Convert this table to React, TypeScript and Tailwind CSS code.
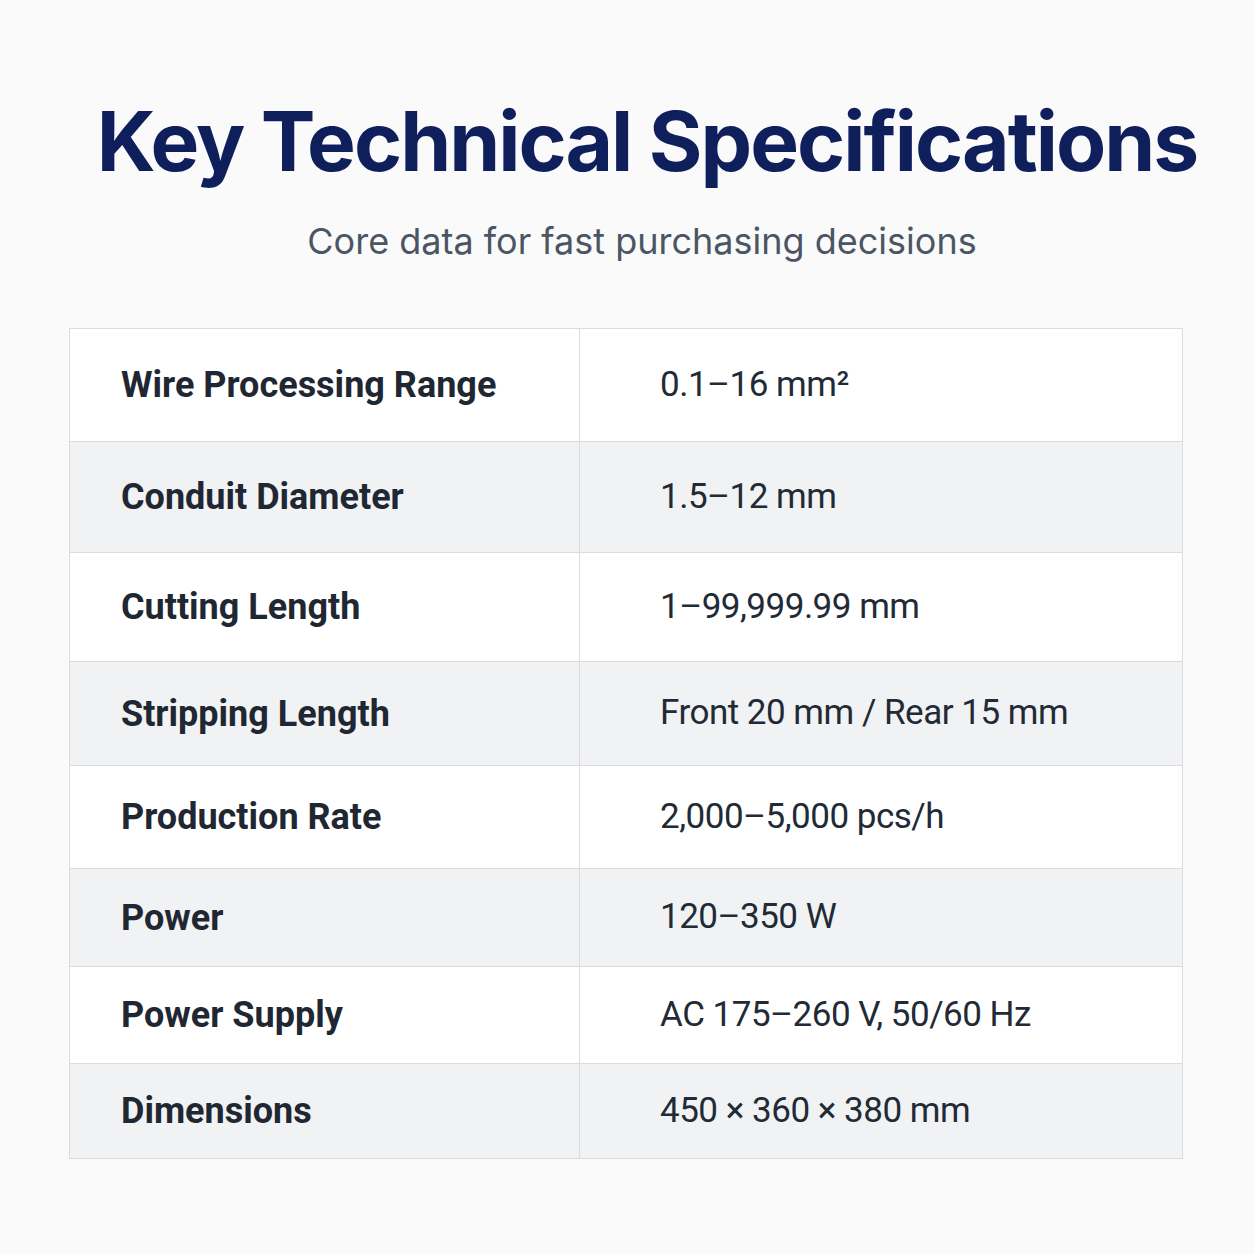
const specs = [
  { label: "Wire Processing Range", value: "0.1–16 mm²", h: "h-[112px]" },
  { label: "Conduit Diameter", value: "1.5–12 mm", h: "h-[111px]" },
  { label: "Cutting Length", value: "1–99,999.99 mm", h: "h-[109px]" },
  { label: "Stripping Length", value: "Front 20 mm / Rear 15 mm", h: "h-[104px]" },
  { label: "Production Rate", value: "2,000–5,000 pcs/h", h: "h-[103px]" },
  { label: "Power", value: "120–350 W", h: "h-[98px]" },
  { label: "Power Supply", value: "AC 175–260 V, 50/60 Hz", h: "h-[97px]" },
  { label: "Dimensions", value: "450 × 360 × 380 mm", h: "h-[95px]" },
];

export default function App() {
  return (
    <div className="w-[1254px] h-[1254px] bg-[#fafafb] font-['Inter',sans-serif]">
      <div className="pt-[92px] pl-[40px] text-center">
        <h1 className="text-[82px] leading-[100px] font-bold tracking-[-2px] text-[#0f1f5c]">
          Key Technical Specifications
        </h1>
        <p className="mt-[24px] pr-[10px] text-[36px] leading-[50px] text-[#4b5563]">
          Core data for fast purchasing decisions
        </p>
      </div>

      <div className="mt-[62px] ml-[69px] w-[1114px] border border-[#dcdcdf] font-['Roboto',sans-serif]">
        {specs.map((row, i) => (
          <div
            key={row.label}
            className={`flex ${row.h} ${i > 0 ? "border-t border-[#dcdcdf]" : ""} ${i % 2 === 1 ? "bg-[#f1f2f4]" : "bg-white"}`}
          >
            <div className="w-[510px] flex items-center pl-[51px] border-r border-[#dcdcdf] text-[36px] font-bold text-[#1f2732]">
              {row.label}
            </div>
            <div className="flex-1 flex items-center pl-[80px] text-[35px] tracking-[-0.5px] text-[#222a35]">
              {row.value}
            </div>
          </div>
        ))}
      </div>
    </div>
  );
}
